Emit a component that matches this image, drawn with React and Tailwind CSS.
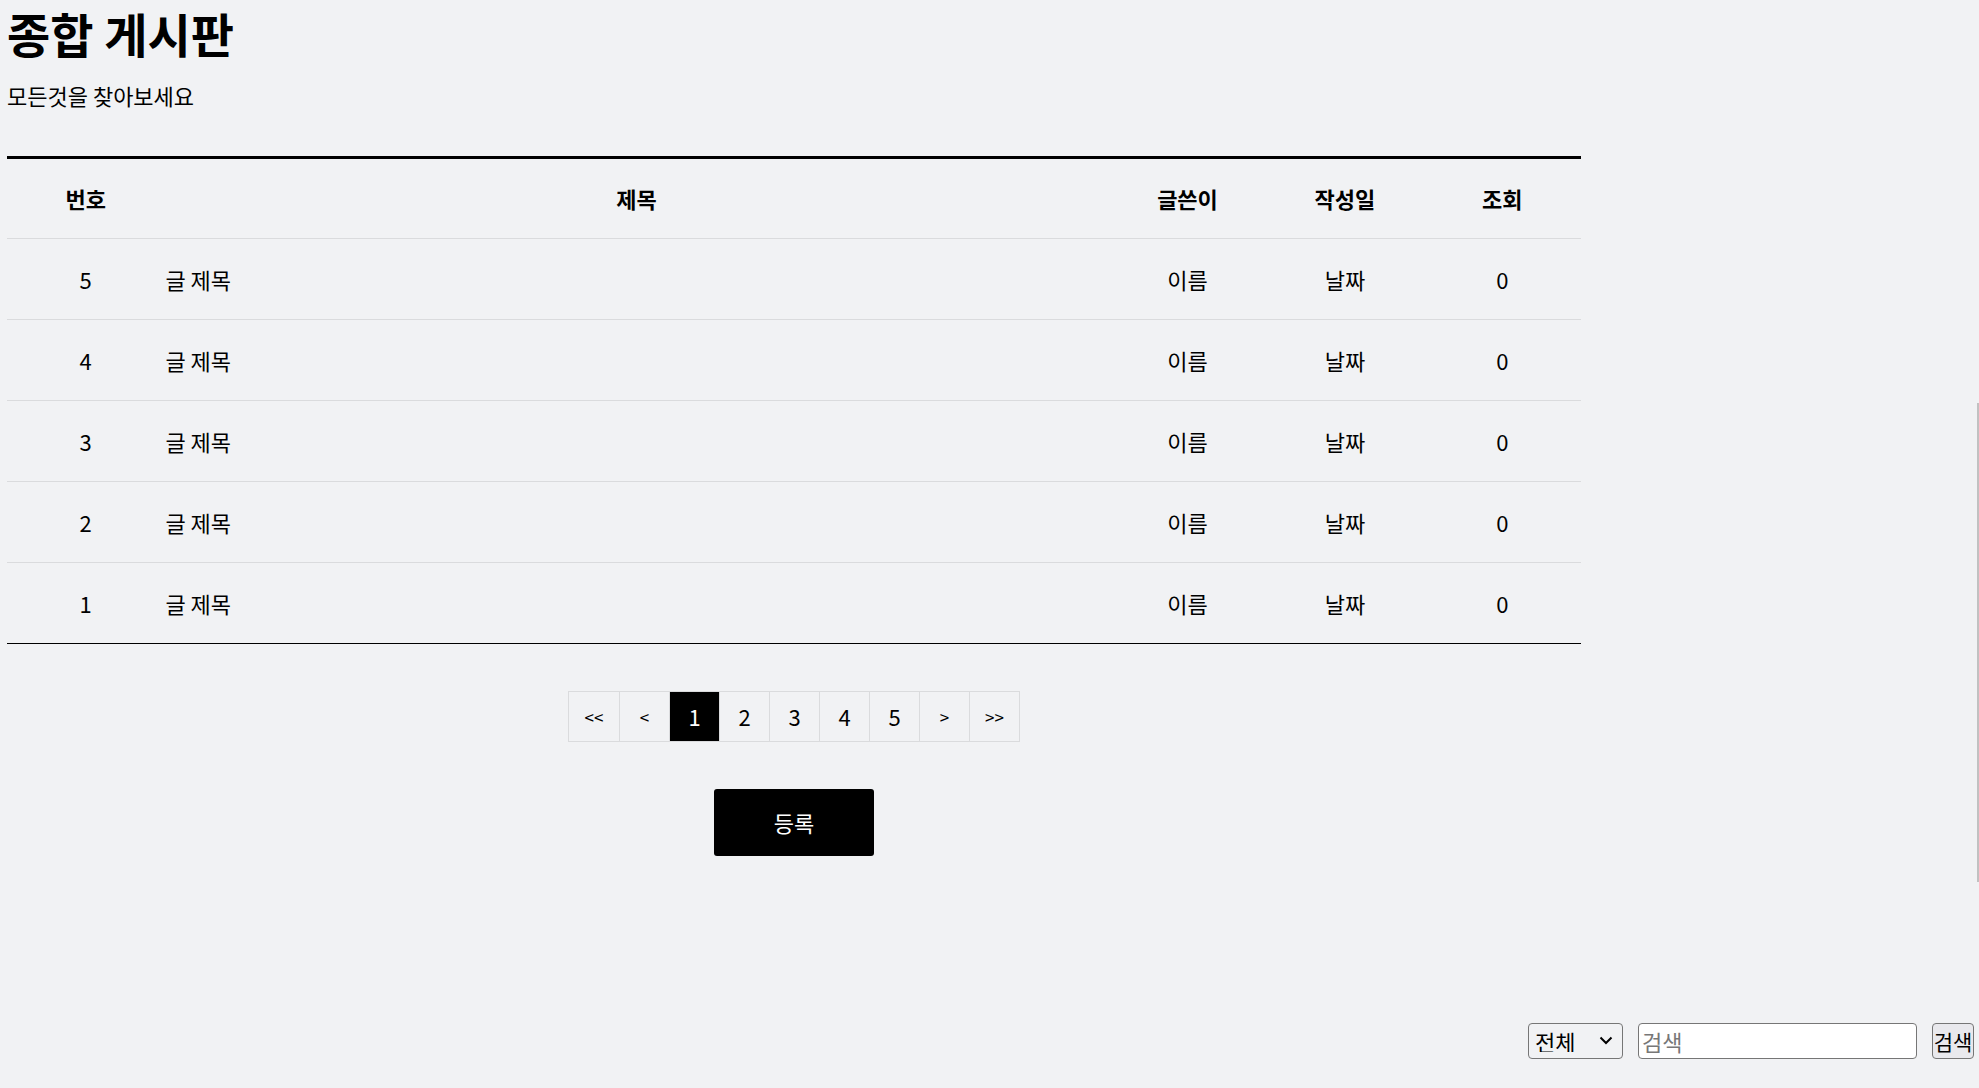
const posts = [5, 4, 3, 2, 1];
const pages = ['<<', '<', '1', '2', '3', '4', '5', '>', '>>'];

export default function App() {
  return (
    <div className="min-h-screen bg-[#f1f2f4] text-black font-['Noto_Sans_CJK_KR','Noto_Sans',sans-serif]">
      <div className="w-[1574px] ml-[7px]">
        <h1 className="pt-[3px] text-[47px] leading-[60px] font-bold">종합 게시판</h1>
        <p className="mt-[17px] text-[22px] leading-[30px]">모든것을 찾아보세요</p>

        {/* board */}
        <table className="mt-[46px] w-full border-collapse border-t-[3px] border-b border-black text-[22px]">
          <thead>
            <tr className="h-[81px] border-b border-[#dadbdd]">
              <th className="w-[10%] font-bold">번호</th>
              <th className="w-[60%] font-bold">제목</th>
              <th className="w-[10%] font-bold">글쓴이</th>
              <th className="w-[10%] font-bold">작성일</th>
              <th className="w-[10%] font-bold">조회</th>
            </tr>
          </thead>
          <tbody>
            {posts.map((n) => (
              <tr key={n} className="h-[81px] border-b border-[#dadbdd] last:border-black">
                <td className="text-center">{n}</td>
                <td className="text-left pl-[1px]">글 제목</td>
                <td className="text-center">이름</td>
                <td className="text-center">날짜</td>
                <td className="text-center">0</td>
              </tr>
            ))}
          </tbody>
        </table>

        {/* pagination */}
        <div className="mt-[47px] flex justify-center">
          <div className="flex border border-[#dadbdd]">
            {pages.map((p, i) => (
              <button
                key={p}
                className={`w-[50px] h-[49px] flex items-center justify-center ${
                  i > 0 ? 'border-l border-[#dadbdd]' : ''
                } ${p === '1' ? 'bg-black text-white' : ''} ${
                  p.length > 1 || p === '<' || p === '>' ? 'text-[17px]' : 'text-[22px]'
                }`}
              >
                {p}
              </button>
            ))}
          </div>
        </div>

        <div className="mt-[47px] flex justify-center">
          <button className="w-[160px] h-[67px] rounded-[3px] bg-black text-white text-[22px]">등록</button>
        </div>
      </div>

      {/* search */}
      <div className="mt-[167px] flex justify-end items-center pr-[5px] pb-[29px]">
        <div className="relative">
          <select className="appearance-none w-[95px] h-[36px] pl-[6px] pr-[24px] border border-[#767676] rounded-[4px] bg-[#f1f2f4] text-[22px] leading-none text-black">
            <option>전체</option>
            <option>제목</option>
            <option>글쓴이</option>
          </select>
          <svg className="pointer-events-none absolute right-[10px] top-[13px]" width="14" height="9" viewBox="0 0 14 9" fill="none">
            <path d="M1.5 1.5L7 7L12.5 1.5" stroke="#000" strokeWidth="2" />
          </svg>
        </div>
        <input
          className="ml-[15px] w-[279px] h-[36px] px-[3px] border border-[#767676] rounded-[4px] bg-white text-[22px] placeholder:text-[#777]"
          placeholder="검색"
        />
        <button className="ml-[15px] w-[42px] h-[36px] px-0 border border-[#767676] rounded-[4px] bg-[#e9e9ed] text-[21px] leading-none">검색</button>
      </div>

      <div className="fixed right-0 top-[403px] w-[2px] h-[479px] bg-[#c1c1c1]" />
    </div>
  );
}
